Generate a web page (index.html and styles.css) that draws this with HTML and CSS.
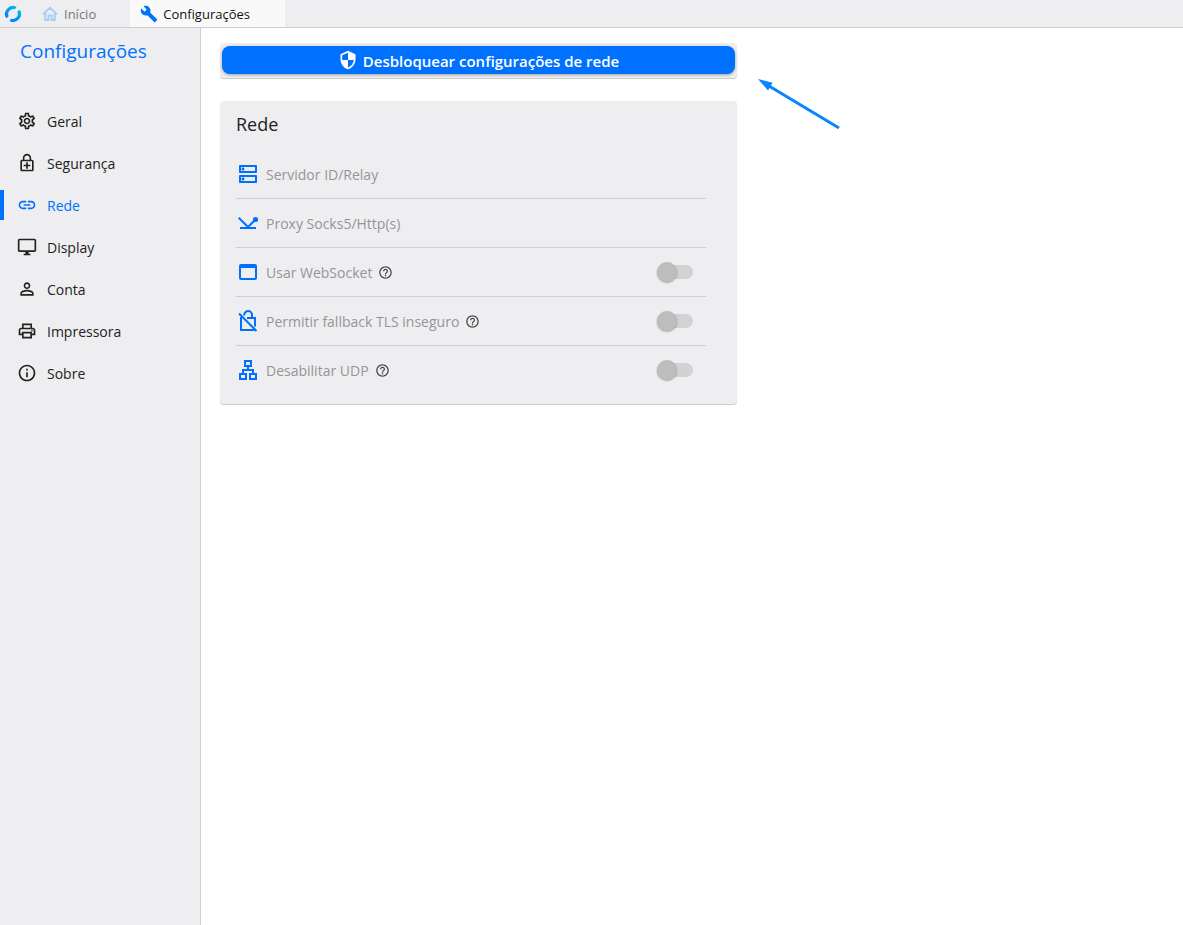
FILE: index.html
```html
<!DOCTYPE html>
<html lang="pt-BR">
<head>
<meta charset="utf-8">
<title>Configurações</title>
<link rel="stylesheet" href="styles.css">
</head>
<body>
<header class="tabbar">
  <svg class="logo" viewBox="0 0 18 18" aria-hidden="true">
    <defs><linearGradient id="lg" gradientUnits="userSpaceOnUse" x1="15" y1="2" x2="3" y2="16"><stop offset="0" stop-color="#00c6e4"/><stop offset="1" stop-color="#0071ff"/></linearGradient></defs>
    <path fill="url(#lg)" d="M12.600 1.900A8 8 0 0 0 2.200 13.300L4.700 11.200A5 5 0 0 1 10.800 4.300zM5.400 16.100A8 8 0 0 0 15.800 4.700L13.300 6.800A5 5 0 0 1 7.200 13.700z"/>
  </svg>
  <nav class="tabs">
    <a class="tab tab-home" href="#"><svg class="icon16 home" viewBox="0 0 16 16" fill="none" stroke="#a6cdf6" stroke-width="2" aria-hidden="true"><path d="M1 8.200 8 1.800 15 8.200M3.200 7.200V14H6.400V9.500H9.600V14H12.800V7.200"/></svg><span>Início</span></a>
    <a class="tab tab-active" href="#"><svg class="icon18" viewBox="0 0 24 24" aria-hidden="true"><path d="M22.700 19l-9.100-9.100c.9-2.300.4-5-1.500-6.900-2-2-5-2.400-7.400-1.300L9 6 6 9 1.600 4.700C.4 7.100.9 10.100 2.900 12.100c1.900 1.900 4.600 2.400 6.900 1.500l9.100 9.100c.4.4 1 .4 1.400 0l2.300-2.300c.5-.4.5-1.100.1-1.400z"/></svg><span>Configurações</span></a>
  </nav>
</header>
<div class="layout">
  <aside class="sidebar">
    <h1 class="title">Configurações</h1>
    <nav class="menu">
      <a class="item" href="#"><svg class="icon20" viewBox="0 0 24 24" aria-hidden="true"><path d="M19.43 12.98c.04-.32.07-.64.07-.98s-.03-.66-.07-.98l2.11-1.65c.19-.15.24-.42.12-.64l-2-3.46c-.09-.16-.26-.25-.44-.25-.06 0-.12.01-.17.03l-2.49 1c-.52-.4-1.08-.73-1.69-.98l-.38-2.65C14.46 2.18 14.25 2 14 2h-4c-.25 0-.46.18-.49.42l-.38 2.65c-.61.25-1.17.59-1.69.98l-2.49-1c-.06-.02-.12-.03-.18-.03-.17 0-.34.09-.43.25l-2 3.46c-.13.22-.07.49.12.64l2.11 1.65c-.04.32-.07.65-.07.98s.03.66.07.98l-2.11 1.65c-.19.15-.24.42-.12.64l2 3.46c.09.16.26.25.44.25.06 0 .12-.01.17-.03l2.49-1c.52.4 1.08.73 1.69.98l.38 2.65c.03.24.24.42.49.42h4c.25 0 .46-.18.49-.42l.38-2.65c.61-.25 1.17-.59 1.69-.98l2.49 1c.06.02.12.03.18.03.17 0 .34-.09.43-.25l2-3.46c.12-.22.07-.49-.12-.64l-2.11-1.65zm-1.98-1.71c.04.31.05.52.05.73 0 .21-.02.43-.05.73l-.14 1.13.89.7 1.08.84-.7 1.21-1.27-.51-1.04-.42-.9.68c-.43.32-.84.56-1.25.73l-1.06.43-.16 1.13-.2 1.35h-1.4l-.19-1.35-.16-1.13-1.06-.43c-.43-.18-.83-.41-1.23-.71l-.91-.7-1.06.43-1.27.51-.7-1.21 1.08-.84.89-.7-.14-1.13c-.03-.31-.05-.54-.05-.74s.02-.43.05-.73l.14-1.13-.89-.7-1.08-.84.7-1.21 1.27.51 1.04.42.9-.68c.43-.32.84-.56 1.25-.73l1.06-.43.16-1.13.2-1.35h1.39l.19 1.35.16 1.13 1.06.43c.43.18.83.41 1.23.71l.91.7 1.06-.43 1.27-.51.7 1.21-1.07.85-.89.7.14 1.13zM12 8c-2.21 0-4 1.79-4 4s1.79 4 4 4 4-1.79 4-4-1.79-4-4-4zm0 6c-1.1 0-2-.9-2-2s.9-2 2-2 2 .9 2 2-.9 2-2 2z"/></svg><span>Geral</span></a>
      <a class="item" href="#"><svg class="icon20" viewBox="0 0 24 24" aria-hidden="true"><path d="M18 8h-1V6c0-2.76-2.24-5-5-5S7 3.240 7 6v2H6c-1.100 0-2 .9-2 2v10c0 1.100.9 2 2 2h12c1.100 0 2-.9 2-2V10c0-1.100-.9-2-2-2zM8.900 6c0-1.710 1.390-3.100 3.100-3.100s3.100 1.390 3.100 3.100v2H8.900V6zM18 20H6V10h12v10zM11 19h2v-3h3v-2h-3v-3h-2v3H8v2h3z"/></svg><span>Segurança</span></a>
      <a class="item item-active" href="#" aria-current="page"><svg class="icon20" viewBox="0 0 24 24" aria-hidden="true"><path d="M3.900 12c0-1.710 1.390-3.100 3.100-3.100h4V7H7c-2.760 0-5 2.240-5 5s2.240 5 5 5h4v-1.900H7c-1.710 0-3.100-1.390-3.100-3.100zM8 13h8v-2H8v2zm9-6h-4v1.900h4c1.710 0 3.100 1.390 3.100 3.100s-1.390 3.100-3.100 3.100h-4V17h4c2.760 0 5-2.240 5-5s-2.240-5-5-5z"/></svg><span>Rede</span></a>
      <a class="item" href="#"><svg class="icon20" viewBox="0 0 24 24" aria-hidden="true"><path d="M21 2H3c-1.100 0-2 .9-2 2v12c0 1.100.9 2 2 2h7v2H8v2h8v-2h-2v-2h7c1.100 0 2-.9 2-2V4c0-1.100-.9-2-2-2zm0 14H3V4h18v12z"/></svg><span>Display</span></a>
      <a class="item" href="#"><svg class="icon20" viewBox="0 0 24 24" aria-hidden="true"><path d="M12 5.900c1.160 0 2.100.94 2.100 2.100s-.94 2.100-2.100 2.100S9.900 9.160 9.900 8s.94-2.100 2.100-2.100m0 9c2.970 0 6.100 1.460 6.100 2.100v1.100H5.900V17c0-.64 3.130-2.100 6.100-2.100M12 4C9.790 4 8 5.790 8 8s1.790 4 4 4 4-1.790 4-4-1.790-4-4-4zm0 9c-2.670 0-8 1.340-8 4v3h16v-3c0-2.660-5.330-4-8-4z"/></svg><span>Conta</span></a>
      <a class="item" href="#"><svg class="icon20" viewBox="0 0 24 24" aria-hidden="true"><path d="M19 8h-1V3H6v5H5c-1.660 0-3 1.340-3 3v6h4v4h12v-4h4v-6c0-1.660-1.340-3-3-3zM8 5h8v3H8V5zm8 12v2H8v-4h8v2zm2-2v-2H6v2H4v-4c0-.55.45-1 1-1h14c.55 0 1 .45 1 1v4h-2z"/><circle cx="18" cy="11.500" r="1"/></svg><span>Impressora</span></a>
      <a class="item" href="#"><svg class="icon20" viewBox="0 0 24 24" aria-hidden="true"><path d="M11 7h2v2h-2zm0 4h2v6h-2zm1-9C6.480 2 2 6.480 2 12s4.480 10 10 10 10-4.480 10-10S17.520 2 12 2zm0 18c-4.410 0-8-3.590-8-8s3.590-8 8-8 8 3.590 8 8-3.590 8-8 8z"/></svg><span>Sobre</span></a>
    </nav>
  </aside>
  <main class="content">
    <div class="column">
      <div class="card unlock">
        <button class="unlock-btn" type="button"><svg class="icon20" viewBox="0 0 24 24" aria-hidden="true"><path d="M12 1 3 5v6c0 5.550 3.840 10.740 9 12 5.160-1.260 9-6.450 9-12V5l-9-4zm0 10.990h7c-.53 4.120-3.280 7.790-7 8.940V12H5V6.300l7-3.110v8.800z"/></svg><span>Desbloquear configurações de rede</span></button>
      </div>
      <section class="card network">
        <h2 class="card-title">Rede</h2>
        <div class="rows">
          <button class="row" type="button" disabled><svg class="icon24" viewBox="0 0 24 24" aria-hidden="true"><path d="M19 15v4H5v-4h14m1-2H4c-.55 0-1 .45-1 1v6c0 .55.45 1 1 1h16c.55 0 1-.45 1-1v-6c0-.55-.45-1-1-1zM7 18.500c-.82 0-1.500-.67-1.500-1.500s.68-1.500 1.500-1.500 1.500.67 1.500 1.500-.67 1.500-1.500 1.500zM19 5v4H5V5h14m1-2H4c-.55 0-1 .45-1 1v6c0 .55.45 1 1 1h16c.55 0 1-.45 1-1V4c0-.55-.45-1-1-1zM7 8.500c-.82 0-1.500-.67-1.500-1.500S6.180 5.500 7 5.500s1.500.68 1.500 1.500S7.830 8.500 7 8.500z"/></svg><span>Servidor ID/Relay</span></button>
          <button class="row" type="button" disabled><svg class="icon24" viewBox="0 0 24 24" aria-hidden="true"><path class="line" d="M2.700 6.700 12 16 19 9M4 17H20"/><circle cx="19.500" cy="8.500" r="2.600"/></svg><span>Proxy Socks5/Http(s)</span></button>
          <label class="row"><svg class="icon24" viewBox="0 0 24 24" aria-hidden="true"><path d="M19 4H5c-1.110 0-2 .9-2 2v12c0 1.100.89 2 2 2h14c1.100 0 2-.9 2-2V6c0-1.100-.89-2-2-2zm0 14H5V8h14v10z"/></svg><span>Usar WebSocket</span><svg class="help" viewBox="0 0 24 24" aria-hidden="true"><use href="#help"/></svg><input class="switch" type="checkbox" disabled></label>
          <label class="row"><svg class="icon24" viewBox="0 0 24 24" aria-hidden="true"><path class="line" d="M3 4.500 20.500 22M5 8V21H18.500M11 9H19V17.500M8.200 6.500V6A3.900 3.900 0 0 1 16 6V9"/></svg><span>Permitir fallback TLS inseguro</span><svg class="help" viewBox="0 0 24 24" aria-hidden="true"><use href="#help"/></svg><input class="switch" type="checkbox" disabled></label>
          <label class="row"><svg class="icon24" viewBox="0 0 24 24" aria-hidden="true"><path d="M13 22h8v-7h-3v-4h-5V9h3V2H8v7h3v2H6v4H3v7h8v-7H8v-2h8v2h-3v7zM10 7V4h4v3h-4zm-1 10v3H5v-3h4zm10 0v3h-4v-3h4z"/></svg><span>Desabilitar UDP</span><svg class="help" viewBox="0 0 24 24" aria-hidden="true"><path id="help" d="M11 18h2v-2h-2v2zm1-16C6.480 2 2 6.480 2 12s4.480 10 10 10 10-4.480 10-10S17.520 2 12 2zm0 18c-4.410 0-8-3.590-8-8s3.590-8 8-8 8 3.590 8 8-3.590 8-8 8zm0-14c-2.210 0-4 1.790-4 4h2c0-1.100.9-2 2-2s2 .9 2 2c0 2-3 1.750-3 5h2c0-2.250 3-2.500 3-5 0-2.210-1.790-4-4-4z"/></svg><input class="switch" type="checkbox" disabled></label>
        </div>
      </section>
    </div>
    <svg class="arrow" viewBox="0 0 84 52" aria-hidden="true"><path d="M82 50 12 8" stroke="#0a84ff" stroke-width="3"/><path fill="#0a84ff" d="M1 1 15.500 4.700 13.500 8.500 11 12.500z"/></svg>
  </main>
</div>
</body>
</html>
```
FILE: styles.css
```css
* { box-sizing: border-box; }
body {
  margin: 0;
  min-height: 100vh;
  display: flex;
  flex-direction: column;
  background: #fff;
  color: #222;
  font-family: "Open Sans", "Noto Sans", sans-serif;
  font-size: 14px;
  line-height: 20px;
}
a { color: inherit; text-decoration: none; }
svg { flex: none; fill: currentColor; }
.icon16 { width: 16px; height: 16px; }
.icon18 { width: 18px; height: 18px; }
.icon20 { width: 20px; height: 20px; }
.icon24 { width: 24px; height: 24px; }

.tabbar {
  display: flex;
  align-items: center;
  height: 28px;
  padding-left: 4px;
  background: #eeeef0;
  border-bottom: 1px solid #cfcfd1;
}
.logo { width: 18px; height: 18px; }
.tabs { display: flex; align-self: stretch; font-size: 13px; }
.tab { display: flex; align-items: center; padding: 0 34px 0 20px; gap: 6px; color: #777; }
.home { fill: none; }
.tab-active { padding: 0 35px 0 10px; gap: 5px; background: #f9f9f9; color: #111; }
.tab-active svg { fill: #0071ff; }

.layout { display: flex; flex: 1; }
.sidebar { width: 201px; flex: none; background: #eeeef0; border-right: 1px solid #cfcfd1; }
.title {
  margin: 0;
  height: 72px;
  padding: 10px 20px;
  font-size: 19px;
  line-height: 26px;
  font-weight: 400;
  color: #0071ff;
}
.menu { display: flex; flex-direction: column; }
.item { display: flex; align-items: center; gap: 10px; height: 42px; padding-left: 17px; }
.item span, .row span, .unlock-btn span { padding-top: 2px; }
.item-active {
  color: #0071ff;
  background: linear-gradient(#0071ff, #0071ff) left center / 4px 30px no-repeat;
}

.content { display: flex; align-items: flex-start; gap: 20px; flex: 1; padding: 15px 20px 20px 19px; }
.column { width: 517px; display: flex; flex-direction: column; gap: 23px; }
.card { background: #eeeef0; border-radius: 4px; box-shadow: 0 1px 1px #c8c8ca; }
.unlock { padding: 3px 2px 4px; }
.unlock-btn {
  display: flex;
  align-items: center;
  justify-content: center;
  gap: 5px;
  width: 100%;
  height: 28px;
  padding: 0;
  border: 0;
  border-radius: 8px;
  background: #0071ff;
  box-shadow: 0 1px 3px rgba(0, 0, 0, .35);
  color: #fff;
  font: 600 15px/20px "Open Sans", "Noto Sans", sans-serif;
}
.network { padding: 10px 31px 9px 16px; }
.card-title { margin: 0; font-size: 18px; line-height: 26px; font-weight: 400; }
.rows { padding-top: 13px; }
.row {
  display: flex;
  align-items: center;
  width: 100%;
  height: 49px;
  padding: 0 13px 0 0;
  border: 0;
  border-bottom: 1px solid #cfcfd1;
  background: none;
  color: #959597;
  font: inherit;
}
.row:last-child { border-bottom-color: transparent; }
.row .icon24 { margin-right: 6px; fill: #0071ff; }
.row .line { fill: none; stroke: #0071ff; stroke-width: 2; }
.help { width: 15px; height: 15px; margin-left: 6px; color: #444; }
.switch {
  appearance: none;
  position: relative;
  width: 36px;
  height: 14px;
  margin: 0 0 0 auto;
  border-radius: 7px;
  background: #d2d2d4;
}
.switch::before {
  content: "";
  position: absolute;
  left: 0;
  top: -3px;
  width: 20px;
  height: 20px;
  border-radius: 50%;
  background: #bdbdbd;
  box-shadow: 0 1px 2px rgba(0, 0, 0, .3);
}
.arrow { width: 84px; height: 52px; margin-top: 35px; fill: none; }
```
